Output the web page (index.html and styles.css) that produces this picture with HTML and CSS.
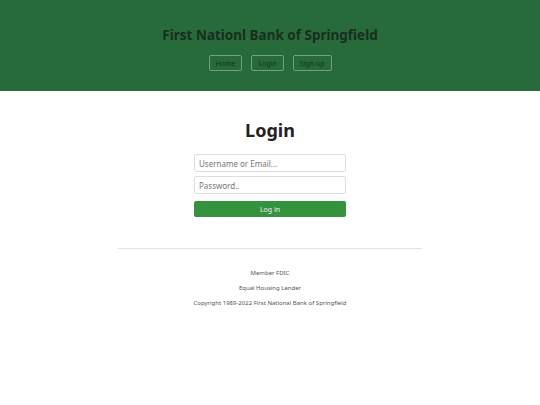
FILE: index.html
```html
<!DOCTYPE html>
<html>
<head>
<meta charset="utf-8">
<link rel="stylesheet" href="styles.css">
</head>
<body>
<header class="header">
  <h1 class="brand">First Nationl Bank of Springfield</h1>
  <nav class="nav">
    <a class="nav-btn" href="#">Home</a>
    <a class="nav-btn" href="#">Login</a>
    <a class="nav-btn" href="#">Sign up</a>
  </nav>
</header>
<main class="main">
  <h2 class="title">Login</h2>
  <form class="form">
    <input class="field" type="text" placeholder="Username or Email...">
    <input class="field" type="password" placeholder="Password..">
    <button class="submit" type="button">Log in</button>
  </form>
  <hr class="rule">
  <footer class="footer">
    <p class="note">Member FDIC</p>
    <p class="note">Equal Housing Lender</p>
    <p class="note">Copyright 1989-2022 First National Bank of Springfield</p>
  </footer>
</main>
</body>
</html>
```
FILE: styles.css
```css
* { box-sizing: border-box; }
html, body { margin: 0; padding: 0; background: #fff; }
body { font-family: "Noto Sans", "Open Sans", sans-serif; color: #222; }
.header {
  background: #276b3b;
  height: 91px;
  display: flex;
  flex-direction: column;
  align-items: center;
  padding-top: 25px;
}
.brand {
  margin: 0;
  font-size: 13.5px;
  font-weight: 700;
  line-height: 20px;
  color: #1a2e1f;
}
.nav {
  display: flex;
  gap: 9px;
  margin-top: 10px;
}
.nav-btn {
  display: flex;
  align-items: center;
  justify-content: center;
  height: 16px;
  padding: 0 6px;
  border: 1px solid #6fa17a;
  border-radius: 2px;
  font-size: 7px;
  color: #17301d;
  text-decoration: none;
}
.main {
  display: flex;
  flex-direction: column;
  align-items: center;
}
.title {
  margin: 27px 0 0;
  font-size: 18px;
  font-weight: 700;
  line-height: 24px;
  color: #222;
}
.form {
  display: flex;
  flex-direction: column;
  width: 152px;
  margin-top: 12px;
  gap: 4px;
}
.field {
  height: 18px;
  border: 1px solid #dedede;
  border-radius: 2px;
  padding: 0 4px;
  font-family: inherit;
  font-size: 8px;
  color: #333;
}
.field::placeholder { color: #777; }
.submit {
  margin-top: 3px;
  height: 16px;
  border: none;
  border-radius: 2px;
  background: #35923f;
  color: #e8f3ea;
  font-family: inherit;
  font-size: 7px;
}
.rule {
  width: 304px;
  border: none;
  border-top: 1px solid #e4e4e4;
  margin: 31px 0 0;
}
.footer {
  display: flex;
  flex-direction: column;
  align-items: center;
  gap: 7px;
  margin-top: 20px;
}
.note {
  margin: 0;
  font-size: 6px;
  line-height: 8px;
  color: #555;
}
```
